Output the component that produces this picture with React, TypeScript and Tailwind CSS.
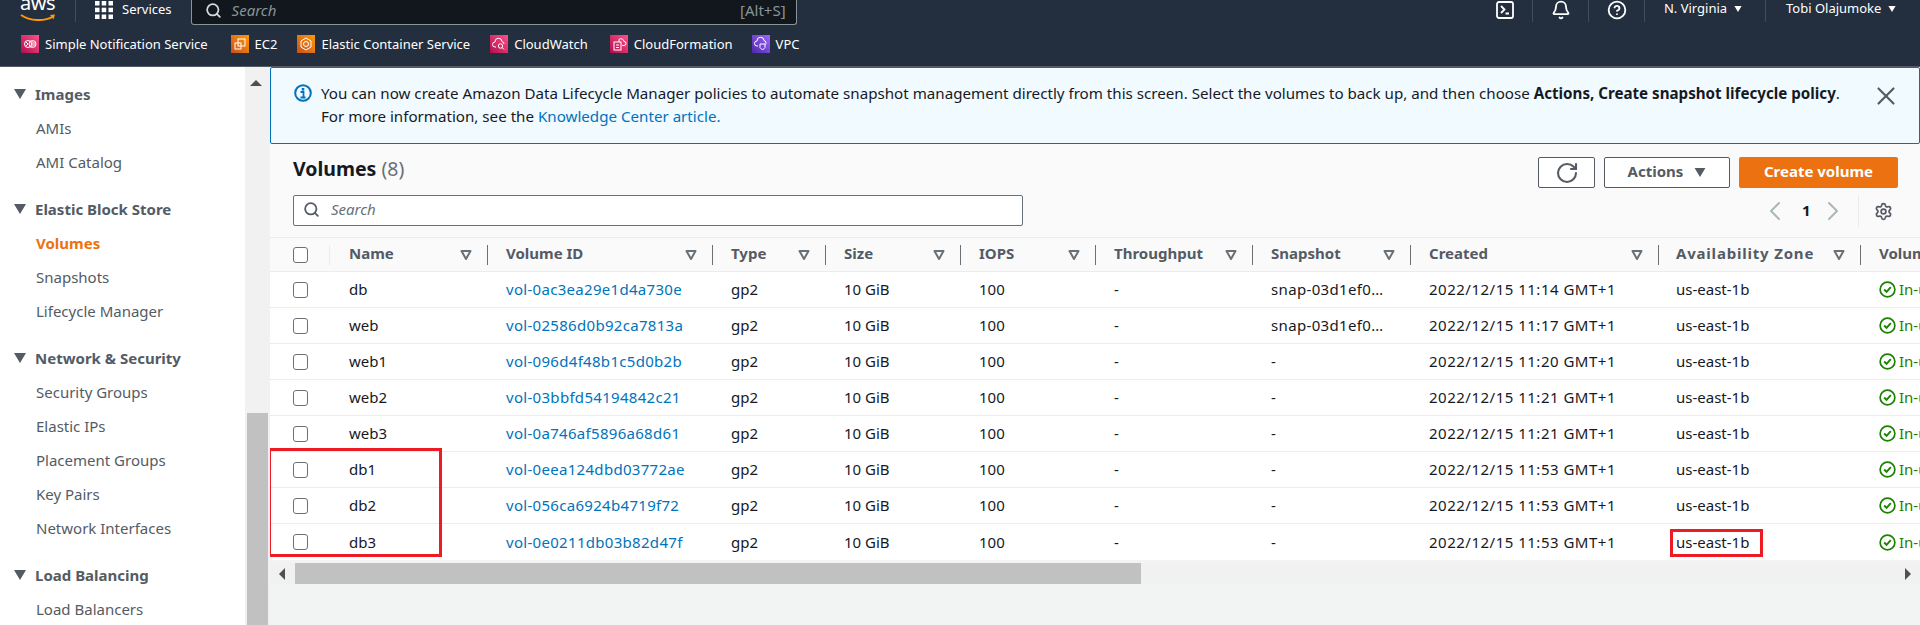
import React from "react";
import { ChevronLeft, ChevronRight, X, Search, RotateCw, Settings, Bell, CircleHelp } from "lucide-react";

function Caret({ className = "" }: { className?: string }) {
  return (
    <svg viewBox="0 0 12 10" className={className} fill="currentColor">
      <path d="M0 0h12L6 10z" />
    </svg>
  );
}

function FilterIcon() {
  return (
    <svg viewBox="0 0 12 12" className="h-[12px] w-[12px] shrink-0 text-[#687078]" fill="none" stroke="currentColor" strokeWidth="2">
      <path d="M1.5 2h9L6 10z" strokeLinejoin="round" />
    </svg>
  );
}

const services = [
  {
    name: "Simple Notification Service",
    bg: "bg-linear-to-tr from-[#b0084d] to-[#ff4f8b]",
    gap: "mr-[23px]",
    icon: (
      <>
        <circle cx="7" cy="9" r="3.5" />
        <circle cx="11.5" cy="9" r="3.5" />
        <path d="M5 7l2 2-2 2M11 6v6M13 7v4" />
      </>
    ),
  },
  {
    name: "EC2",
    bg: "bg-linear-to-tr from-[#c8511b] to-[#ff9900]",
    gap: "mr-[20px]",
    icon: (
      <>
        <rect x="7" y="4" width="7" height="7" />
        <rect x="4" y="8" width="6" height="6" />
      </>
    ),
  },
  {
    name: "Elastic Container Service",
    bg: "bg-linear-to-tr from-[#c8511b] to-[#ff9900]",
    gap: "mr-[20px]",
    icon: (
      <>
        <path d="M9 3l5 3v6l-5 3-5-3V6z" />
        <circle cx="9" cy="9" r="2.5" />
      </>
    ),
  },
  {
    name: "CloudWatch",
    bg: "bg-linear-to-tr from-[#b0084d] to-[#ff4f8b]",
    gap: "mr-[22px]",
    icon: (
      <>
        <path d="M6 12H5a2.5 2.5 0 0 1 0-5 3.5 3.5 0 0 1 7-.5 2.5 2.5 0 0 1 2 2.5" />
        <circle cx="10.5" cy="11" r="2.2" />
        <path d="M12 12.5l2 2" />
      </>
    ),
  },
  {
    name: "CloudFormation",
    bg: "bg-linear-to-tr from-[#b0084d] to-[#ff4f8b]",
    gap: "mr-[19px]",
    icon: (
      <>
        <path d="M9 7V4.5a3 3 0 0 1 5 2 2 2 0 0 1 0 4h-2" />
        <rect x="4" y="7" width="7" height="8" />
        <path d="M6 10h3M6 12.5h3" />
      </>
    ),
  },
  {
    name: "VPC",
    bg: "bg-linear-to-tr from-[#4d27a8] to-[#a166ff]",
    gap: "",
    icon: (
      <>
        <path d="M6 11H5a2.5 2.5 0 0 1 0-5 3.5 3.5 0 0 1 7-.5 2.5 2.5 0 0 1 1.5 4" />
        <path d="M8 9h5v3.5L10.5 15 8 12.5z" />
      </>
    ),
  },
];

const navSections = [
  { title: "Images", mb: "mb-[27px]", items: ["AMIs", "AMI Catalog"] },
  { title: "Elastic Block Store", mb: "mb-[27px]", items: ["Volumes", "Snapshots", "Lifecycle Manager"] },
  {
    title: "Network & Security",
    mb: "mb-[27px]",
    items: ["Security Groups", "Elastic IPs", "Placement Groups", "Key Pairs", "Network Interfaces"],
  },
  { title: "Load Balancing", mb: "", items: ["Load Balancers"] },
];

const columns = [
  { label: "Name", w: "w-[158px]", t: "pl-[19px]" },
  { label: "Volume ID", w: "w-[225px]", t: "pl-[18px]" },
  { label: "Type", w: "w-[113px]", t: "pl-[18px]" },
  { label: "Size", w: "w-[135px]", t: "pl-[18px]" },
  { label: "IOPS", w: "w-[135px]", t: "pl-[18px]" },
  { label: "Throughput", w: "w-[157px]", t: "pl-[18px]" },
  { label: "Snapshot", w: "w-[158px]", t: "pl-[18px]" },
  { label: "Created", w: "w-[248px]", t: "pl-[18px]" },
  { label: "Availability Zone", w: "w-[202px]", t: "pl-[17px] tracking-[0.8px]" },
];

const rows = [
  ["db", "vol-0ac3ea29e1d4a730e", "snap-03d1ef0…", "2022/12/15 11:14 GMT+1"],
  ["web", "vol-02586d0b92ca7813a", "snap-03d1ef0…", "2022/12/15 11:17 GMT+1"],
  ["web1", "vol-096d4f48b1c5d0b2b", "-", "2022/12/15 11:20 GMT+1"],
  ["web2", "vol-03bbfd54194842c21", "-", "2022/12/15 11:21 GMT+1"],
  ["web3", "vol-0a746af5896a68d61", "-", "2022/12/15 11:21 GMT+1"],
  ["db1", "vol-0eea124dbd03772ae", "-", "2022/12/15 11:53 GMT+1"],
  ["db2", "vol-056ca6924b4719f72", "-", "2022/12/15 11:53 GMT+1"],
  ["db3", "vol-0e0211db03b82d47f", "-", "2022/12/15 11:53 GMT+1"],
];

function Checkbox() {
  return <span className="block h-[16px] w-[15px] rounded-[3px] border border-[#687078] bg-white" />;
}

export default function App() {
  return (
    <div className="flex h-[625px] w-[1920px] flex-col overflow-hidden bg-[#f2f3f3] font-['Noto_Sans',sans-serif] text-[15px] text-[#16191f]">
      <header className="h-[67px] shrink-0 border-b border-[#545b64] bg-[#232f3e] text-[13px] text-white">
        <div className="flex h-[26px] items-start">
          <div className="relative ml-[20px] h-[22px] w-[36px] overflow-hidden">
            <span className="absolute -top-[9px] left-0 text-[20px] leading-[24px] tracking-[-0.5px] text-white">aws</span>
            <svg viewBox="0 0 36 8" className="absolute bottom-0 left-0 h-[8px] w-[36px]" fill="none">
              <path d="M1 1c9 6 23 7 32 1.5" stroke="#ff9900" strokeWidth="2" />
              <path d="M30 1l5-.5-1.5 5" fill="#ff9900" />
            </svg>
          </div>
          <div className="ml-[19px] h-[22px] w-px bg-[#414d5c]" />
          <svg viewBox="0 0 18 18" className="ml-[19px] mt-[1px] h-[18px] w-[18px]" fill="#fff">
            <rect x="0" y="0" width="4.5" height="4.5" />
            <rect x="6.7" y="0" width="4.5" height="4.5" />
            <rect x="13.5" y="0" width="4.5" height="4.5" />
            <rect x="0" y="6.7" width="4.5" height="4.5" />
            <rect x="6.7" y="6.7" width="4.5" height="4.5" />
            <rect x="13.5" y="6.7" width="4.5" height="4.5" />
            <rect x="0" y="13.5" width="4.5" height="4.5" />
            <rect x="6.7" y="13.5" width="4.5" height="4.5" />
            <rect x="13.5" y="13.5" width="4.5" height="4.5" />
          </svg>
          <span className="ml-[9px] leading-[18px]">Services</span>
          <div className="ml-[19px] flex h-[25px] w-[606px] items-center rounded-b-[3px] border-x border-b border-[#879596] bg-[#12161d] pb-[3px] pl-[13px] pr-[10px] text-[15px]">
            <Search className="h-[17px] w-[17px] text-[#d5dbdb]" strokeWidth={2.5} />
            <span className="ml-[10px] flex-1 italic text-[#879596]">Search</span>
            <span className="text-[#879596]">[Alt+S]</span>
          </div>
          <div className="ml-auto flex h-[22px] items-start">
            <div className="flex h-[22px] w-[56px] justify-center border-r border-[#414d5c]">
              <svg viewBox="0 0 18 18" className="mt-[1px] h-[18px] w-[18px]" fill="none" stroke="#fff" strokeWidth="1.8">
                <rect x="1" y="1" width="16" height="16" rx="2" />
                <path d="M5 5l3.5 3.5L5 12M9.5 12.5h3.5" />
              </svg>
            </div>
            <div className="flex h-[22px] w-[56px] justify-center border-r border-[#414d5c]">
              <Bell className="h-[20px] w-[20px]" strokeWidth={2.2} />
            </div>
            <div className="flex h-[22px] w-[56px] justify-center border-r border-[#414d5c]">
              <CircleHelp className="h-[20px] w-[20px]" strokeWidth={2.2} />
            </div>
            <div className="flex h-[22px] w-[121px] items-start justify-center gap-[7px] border-r border-[#414d5c] pr-[4px]">
              <span className="leading-[17px]">N. Virginia</span>
              <Caret className="mt-[6px] h-[6px] w-[8px]" />
            </div>
            <div className="flex h-[22px] w-[154px] items-start pl-[20px]">
              <span className="leading-[17px]">Tobi Olajumoke</span>
              <Caret className="ml-[7px] mt-[6px] h-[6px] w-[8px]" />
            </div>
          </div>
        </div>
        <div className="flex h-[40px] items-center pb-[4px] pl-[21px]">
          {services.map((s) => (
            <div key={s.name} className={`flex items-center ${s.gap}`}>
              <span className={`mr-[6px] flex h-[18px] w-[18px] items-center justify-center ${s.bg}`}>
                <svg viewBox="0 0 18 18" className="h-[18px] w-[18px]" fill="none" stroke="#fff" strokeWidth="1">
                  {s.icon}
                </svg>
              </span>
              <span className="leading-[18px]">{s.name}</span>
            </div>
          ))}
        </div>
      </header>

      <div className="flex min-h-0 flex-1">
        <aside className="w-[245px] shrink-0 overflow-hidden bg-white pt-[17px] text-[#545b64]">
          {navSections.map((sec) => (
            <div key={sec.title} className={sec.mb}>
              <div className="flex h-[20px] items-center pl-[14px]">
                <Caret className="mr-[9px] h-[10px] w-[12px]" />
                <span className="font-bold">{sec.title}</span>
              </div>
              <ul className="mt-[14px] flex flex-col gap-[14px] pl-[36px]">
                {sec.items.map((it) => (
                  <li key={it} className={`h-[20px] leading-[20px] ${it === "Volumes" ? "font-bold text-[#ec7211]" : ""}`}>
                    {it}
                  </li>
                ))}
              </ul>
            </div>
          ))}
        </aside>

        <div className="flex w-[25px] shrink-0 flex-col items-center bg-[#f1f1f1] pr-[4px]">
          <svg viewBox="0 0 12 6" className="mt-[13px] h-[6px] w-[12px] text-[#505050]" fill="currentColor">
            <path d="M0 6L6 0l6 6z" />
          </svg>
          <div className="ml-[4px] mt-[327px] h-[212px] w-[21px] shrink-0 bg-[#c1c1c1]" />
        </div>

        <main className="min-w-0 flex-1">
          <div className="flex h-[77px] rounded-[2px] border border-[#0073bb] bg-[#f1faff] pl-[23px] pr-[18px] pt-[14px]">
            <svg viewBox="0 0 18 18" className="mt-[2px] h-[18px] w-[18px] shrink-0" fill="none">
              <circle cx="9" cy="9" r="7.8" stroke="#0073bb" strokeWidth="2" />
              <rect x="7.7" y="4" width="2.6" height="2.6" fill="#0073bb" />
              <path d="M6.5 8h3v5M6.5 13.5h5" stroke="#0073bb" strokeWidth="1.8" />
            </svg>
            <p className="ml-[9px] flex-1 text-[15.15px] leading-[23px]">
              You can now create Amazon Data Lifecycle Manager policies to automate snapshot management directly from this screen. Select the volumes to back up, and then choose{" "}
              <b>Actions, Create snapshot lifecycle policy</b>.
              <br />
              For more information, see the <span className="text-[#0073bb]">Knowledge Center article.</span>
            </p>
            <X className="-mt-[1px] h-[30px] w-[30px] shrink-0 text-[#545b64]" strokeWidth={1.7} />
          </div>

          <section className="flex h-[94px] justify-between border-b border-[#eaeded] bg-[#fafafa] pl-[23px] pr-[22px]">
            <div className="flex flex-col">
              <h2 className="mt-[13px] text-[19.5px] font-bold leading-[24px]">
                Volumes <span className="font-normal text-[#687078]">(8)</span>
              </h2>
              <div className="mt-[14px] flex h-[31px] w-[730px] items-center rounded-[2px] border border-[#687078] bg-white pb-[2px] pl-[9px]">
                <Search className="h-[17px] w-[17px] text-[#545b64]" strokeWidth={2.5} />
                <span className="ml-[11px] italic text-[#687078]">Search</span>
              </div>
            </div>
            <div className="flex flex-col items-end">
              <div className="mt-[13px] flex h-[31px] gap-[9px]">
                <button className="flex w-[57px] items-center justify-center rounded-[2px] border border-[#545b64] bg-white">
                  <RotateCw className="h-[24px] w-[24px] text-[#545b64]" strokeWidth={2.1} />
                </button>
                <button className="flex w-[126px] items-center justify-center gap-[11px] rounded-[2px] border border-[#545b64] bg-white pb-[2px] font-bold text-[#545b64]">
                  Actions
                  <Caret className="mt-[2px] h-[9px] w-[12px]" />
                </button>
                <button className="w-[159px] rounded-[2px] bg-[#ec7211] pb-[2px] font-bold text-white">Create volume</button>
              </div>
              <div className="mt-[7px] flex h-[32px] items-center text-[#16191f]">
                <ChevronLeft className="h-[32px] w-[32px] text-[#aab7b8]" strokeWidth={1.5} />
                <span className="ml-[10.5px] mr-[6.5px] pb-[2px] font-bold">1</span>
                <ChevronRight className="h-[32px] w-[32px] text-[#aab7b8]" strokeWidth={1.5} />
                <div className="ml-[9px] h-[32px] w-px bg-[#eaeded]" />
                <Settings className="ml-[14.5px] mr-[5.5px] h-[19px] w-[19px] text-[#545b64]" strokeWidth={2.2} />
              </div>
            </div>
          </section>

          <div className="relative overflow-hidden">
            <div className="flex h-[34px] w-[1800px] items-center border-b border-[#eaeded] bg-[#fafafa] font-bold text-[#545b64]">
              <div className="flex h-[20px] w-[60px] shrink-0 items-center border-r border-[#eaeded] pl-[23px]">
                <Checkbox />
              </div>
              {columns.map((c) => (
                <div key={c.label} className={`flex h-[20px] shrink-0 items-center justify-between border-r border-[#687078] pr-[15px] ${c.w}`}>
                  <span className={`whitespace-nowrap pb-[2px] ${c.t}`}>{c.label}</span>
                  <FilterIcon />
                </div>
              ))}
              <div className="pb-[2px] pl-[18px]">Volume state</div>
            </div>
            {rows.map((r, i) => (
              <div key={r[0]} className={`flex h-[36px] w-[1800px] items-center bg-white ${i < rows.length - 1 ? "border-b border-[#eaeded]" : ""}`}>
                <div className="flex w-[60px] shrink-0 pl-[23px]">
                  <Checkbox />
                </div>
                <div className="w-[158px] shrink-0 pl-[19px]">{r[0]}</div>
                <div className="w-[225px] shrink-0 pl-[18px] tracking-[0.3px] text-[#0073bb]">{r[1]}</div>
                <div className="w-[113px] shrink-0 pl-[18px]">gp2</div>
                <div className="w-[135px] shrink-0 pl-[18px]">10 GiB</div>
                <div className="w-[135px] shrink-0 pl-[18px]">100</div>
                <div className="w-[157px] shrink-0 pl-[18px]">-</div>
                <div className="w-[158px] shrink-0 pl-[18px] tracking-[0.35px]">{r[2]}</div>
                <div className="w-[248px] shrink-0 pl-[18px] tracking-[0.5px]">{r[3]}</div>
                <div className="w-[202px] shrink-0 pl-[17px]">us-east-1b</div>
                <div className="flex items-center gap-[3px] pl-[18px] text-[#1d8102]">
                  <svg viewBox="0 0 18 18" className="h-[17px] w-[17px]" fill="none" stroke="currentColor" strokeWidth="1.8">
                    <circle cx="9" cy="9" r="7.8" />
                    <path d="M5.5 9l2.5 2.5 4.5-5" strokeWidth="2" />
                  </svg>
                  <span>In-use</span>
                </div>
              </div>
            ))}
            <div className="absolute left-[-2px] top-[210px] h-[109px] w-[174px] border-[3px] border-[#ed1c24]" />
            <div className="absolute left-[1400px] top-[291px] h-[28px] w-[93px] border-[3px] border-[#ed1c24]" />
          </div>

          <div className="mt-[3px] flex h-[21px] items-center bg-[#f1f1f1] text-[#505050]">
            <svg viewBox="0 0 6 12" className="ml-[9px] h-[12px] w-[6px]" fill="currentColor">
              <path d="M6 0L0 6l6 6z" />
            </svg>
            <div className="ml-[10px] h-full w-[846px] bg-[#c1c1c1]" />
            <svg viewBox="0 0 6 12" className="ml-auto mr-[9px] h-[12px] w-[6px]" fill="currentColor">
              <path d="M0 0l6 6-6 6z" />
            </svg>
          </div>
        </main>
      </div>
    </div>
  );
}
